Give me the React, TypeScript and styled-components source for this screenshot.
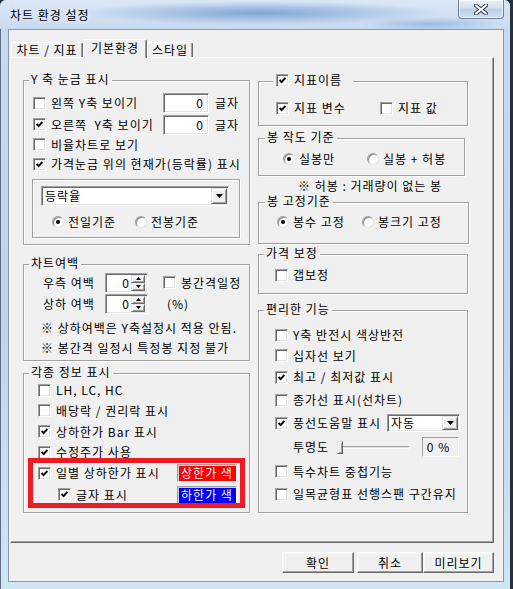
import React from "react"
import styled, { createGlobalStyle } from "styled-components"

/////////////////////////////////////////////////////////////////////////////

const FONT = `"Noto Sans CJK KR", "Noto Sans", "DejaVu Sans", sans-serif`
const FACE = "#f0f0f0"
const SUNKEN = `
  border: 1px solid;
  border-color: #a0a0a0 #ffffff #ffffff #a0a0a0;
  box-shadow: inset 1px 1px 0 #696969, inset -1px -1px 0 #e3e3e3;
`
const RAISED = `
  border: 1px solid;
  border-color: #e3e3e3 #696969 #696969 #e3e3e3;
  box-shadow: inset 1px 1px 0 #ffffff, inset -1px -1px 0 #a0a0a0;
`

const GlobalStyle = createGlobalStyle`
  html, body { margin: 0; padding: 0; }
  body {
    background: #27313c;
    font-family: ${FONT};
    font-size: 12px;
    line-height: 14px;
    letter-spacing: 1px;
    color: #000;
  }
`

/////////////////////////////////////////////////////////////////////////////
// small controls

const CheckMark = () => (
  <svg width="7" height="7" viewBox="0 0 7 7">
    <polyline points="0.6,3 2.6,5.2 6.4,1" fill="none" stroke="#000" strokeWidth="1.9" />
  </svg>
)

const Check = ({ on, label, w }: { on?: boolean; label?: string; w?: number }) => (
  <Item $w={w} $gap={5}>
    <CheckBox>{on && <CheckMark />}</CheckBox>
    {label && <Text>{label}</Text>}
  </Item>
)

const Radio = ({ on, label, w }: { on?: boolean; label: string; w?: number }) => (
  <Item $w={w} $gap={4}>
    <RadioRing>{on && <RadioDot />}</RadioRing>
    <Text>{label}</Text>
  </Item>
)

const Combo = ({ value, w, h }: { value: string; w: number; h: number }) => (
  <ComboBox $w={w} $h={h}>
    <ComboText>{value}</ComboText>
    <DropButton $s={h - 4}>
      <svg width="7" height="4" viewBox="0 0 7 4">
        <path d="M0 0H7L3.5 4Z" fill="#000" />
      </svg>
    </DropButton>
  </ComboBox>
)

const Spin = () => (
  <SpinBox>
    <SpinValue>0</SpinValue>
    <SpinButtons>
      <SpinButton>
        <svg width="5" height="3" viewBox="0 0 5 3">
          <path d="M0 3H5L2.5 0Z" fill="#000" />
        </svg>
      </SpinButton>
      <SpinButton>
        <svg width="5" height="3" viewBox="0 0 5 3">
          <path d="M0 0H5L2.5 3Z" fill="#000" />
        </svg>
      </SpinButton>
    </SpinButtons>
  </SpinBox>
)

const CloseGlyph = () => (
  <svg width="14" height="11" viewBox="0 0 14 11">
    <path d="M2 1.5L12 9.5M12 1.5L2 9.5" stroke="#2d3a4b" strokeWidth="4" strokeLinecap="square" />
    <path d="M2 1.5L12 9.5M12 1.5L2 9.5" stroke="#ffffff" strokeWidth="2" strokeLinecap="square" />
  </svg>
)

/////////////////////////////////////////////////////////////////////////////

const App = () => {
  return (
    <>
      <GlobalStyle />
      <Window>
        <TitleBar>
          <Caption>차트 환경 설정</Caption>
          <CloseButton>
            <CloseGlyph />
          </CloseButton>
        </TitleBar>

        <Client>
          <TabStrip>
            <Tab $w={72}>차트 / 지표</Tab>
            <Tab $w={64} $active>
              기본환경
            </Tab>
            <Tab $w={46}>스타일</Tab>
          </TabStrip>

          <Panel>
            <Column $w={227}>
              <Group $pt={11} $pb={6}>
                <Legend $left={5}>Y 축 눈금 표시</Legend>
                <Row $h={22} $pl={9}>
                  <Check w={130} label="왼쪽 Y축 보이기" />
                  <Edit>0</Edit>
                  <Unit>글자</Unit>
                </Row>
                <Row $h={21} $pl={9}>
                  <Check w={130} on label="오른쪽  Y축 보이기" />
                  <Edit>0</Edit>
                  <Unit>글자</Unit>
                </Row>
                <Row $h={19} $pl={9}>
                  <Check label="비율차트로 보기" />
                </Row>
                <Row $h={20} $pl={9}>
                  <Check on label="가격눈금 위의 현재가(등락률) 표시" />
                </Row>
                <InnerBox>
                  <Combo value="등락율" w={188} h={20} />
                  <Row $h={16} $pl={11} $mt={8}>
                    <Radio w={83} on label="전일기준" />
                    <Radio label="전봉기준" />
                  </Row>
                </InnerBox>
              </Group>

              <Group $pt={7} $pb={2} $mt={19}>
                <Legend $left={5}>차트여백</Legend>
                <Row $h={21} $pl={19}>
                  <FieldLabel>우측 여백</FieldLabel>
                  <Spin />
                  <Spacer $w={15} />
                  <Check label="봉간격일정" />
                </Row>
                <Row $h={21} $pl={19}>
                  <FieldLabel>상하 여백</FieldLabel>
                  <Spin />
                  <Spacer $w={19} />
                  <Text>(%)</Text>
                </Row>
                <Row $h={20} $pl={17} $mt={4}>
                  <Text>※ 상하여백은 Y축설정시 적용 안됨.</Text>
                </Row>
                <Row $h={20} $pl={17}>
                  <Text>※ 봉간격 일정시 특정봉 지정 불가</Text>
                </Row>
              </Group>

              <Group $pt={6} $pb={7} $mt={12}>
                <Legend $left={5}>각종 정보 표시</Legend>
                <Row $h={20} $pl={14}>
                  <Check label="LH, LC, HC" />
                </Row>
                <Row $h={21} $pl={14}>
                  <Check label="배당락 / 권리락 표시" />
                </Row>
                <Row $h={21} $pl={14}>
                  <Check on label="상하한가 Bar 표시" />
                </Row>
                <Row $h={20} $pl={14}>
                  <Check on label="수정주가 사용" />
                </Row>
                <Row $h={22} $pl={14} $pr={12}>
                  <Check on label="일별 상하한가 표시" />
                  <ColorButton $bg="#ff0000">상한가 색</ColorButton>
                </Row>
                <Row $h={21} $pl={34} $pr={12}>
                  <Check on label="글자 표시" />
                  <ColorButton $bg="#0000ff">하한가 색</ColorButton>
                </Row>
                <Highlight />
              </Group>
            </Column>

            <Column $w={211} $pt={1}>
              <Group $w={210} $pt={16} $pb={7}>
                <Legend $left={14} $pr={11} $pl={3}>
                  <Check on label="지표이름" />
                </Legend>
                <Row $h={20} $pl={17}>
                  <Check w={104} on label="지표 변수" />
                  <Check label="지표 값" />
                </Row>
              </Group>

              <Group $w={207} $pt={12} $pb={8} $mt={12}>
                <Legend $left={6}>봉 작도 기준</Legend>
                <Row $h={16} $pl={24}>
                  <Radio w={84} on label="실봉만" />
                  <Radio label="실봉 + 허봉" />
                </Row>
              </Group>

              <Row $h={20} $pl={40}>
                <Text>※ 허봉 : 거래량이 없는 봉</Text>
              </Row>

              <Group $w={211} $pt={11} $pb={13} $mt={6}>
                <Legend $left={6}>봉 고정기준</Legend>
                <Row $h={16} $pl={18}>
                  <Radio w={85} on label="봉수 고정" />
                  <Radio label="봉크기 고정" />
                </Row>
              </Group>

              <Group $w={210} $pt={10} $pb={8} $mt={10}>
                <Legend $left={5}>가격 보정</Legend>
                <Row $h={20} $pl={16}>
                  <Check label="갭보정" />
                </Row>
              </Group>

              <Group $w={210} $pt={14} $pb={7} $mt={16}>
                <Legend $left={5}>편리한 기능</Legend>
                <Row $h={20} $pl={16}>
                  <Check label="Y축 반전시 색상반전" />
                </Row>
                <Row $h={21} $pl={16}>
                  <Check label="십자선 보기" />
                </Row>
                <Row $h={22} $pl={16}>
                  <Check on label="최고 / 최저값 표시" />
                </Row>
                <Row $h={24} $pl={16}>
                  <Check label="종가선 표시(선차트)" />
                </Row>
                <Row $h={22} $pl={16}>
                  <Check w={112} on label="풍선도움말 표시" />
                  <Combo value="자동" w={73} h={18} />
                </Row>
                <Row $h={26} $pl={34}>
                  <FieldLabel $w={44}>투명도</FieldLabel>
                  <Slider>
                    <Track />
                    <Thumb />
                  </Slider>
                  <ValueBox>0 %</ValueBox>
                </Row>
                <Row $h={23} $pl={16}>
                  <Check label="특수차트 중첩기능" />
                </Row>
                <Row $h={22} $pl={16}>
                  <Check label="일목균형표 선행스팬 구간유지" />
                </Row>
              </Group>
            </Column>
          </Panel>

          <ButtonRow>
            <PushButton $w={72} $mr={3}>
              확인
            </PushButton>
            <PushButton $w={66}>취소</PushButton>
            <PushButton $w={71}>미리보기</PushButton>
          </ButtonRow>
        </Client>
      </Window>
    </>
  )
}

/////////////////////////////////////////////////////////////////////////////
// window frame

const Window = styled.div`
  width: 510px;
  height: 589px;
  box-sizing: border-box;
  overflow: hidden;
  border-radius: 6px 6px 0 0;
  background: linear-gradient(180deg, #c8daef 0%, #c0d4eb 55%, #cfe6f4 100%);
  box-shadow: inset 1px 0 0 #5d6e84;
`

const TitleBar = styled.div`
  height: 29px;
  display: flex;
  align-items: flex-start;
  padding-left: 10px;
  background:
    radial-gradient(ellipse 180px 12px at 260px 13px, rgba(74, 124, 196, 0.6), rgba(74, 124, 196, 0)),
    radial-gradient(ellipse 70px 7px at 430px 24px, rgba(110, 155, 215, 0.5), rgba(110, 155, 215, 0)),
    linear-gradient(180deg, #dae7f6 0%, #c9dbf0 100%);
`

const Caption = styled.span`
  margin-top: 8px;
  color: #000;
  text-shadow: 0 0 6px rgba(255, 255, 255, 0.9);
`

const CloseButton = styled.div`
  margin-left: auto;
  margin-right: 6px;
  width: 46px;
  height: 19px;
  box-sizing: border-box;
  display: flex;
  align-items: center;
  justify-content: center;
  border: 1px solid #6f8199;
  border-top: none;
  border-radius: 0 0 4px 4px;
  background: linear-gradient(180deg, #e9f0f9 0%, #d3e0f0 45%, #bccde4 50%, #d2e1f2 100%);
  box-shadow: inset 0 0 0 1px rgba(255, 255, 255, 0.55);
`

const Client = styled.div`
  margin: 0 6px 0 8px;
  height: 553px;
  box-sizing: border-box;
  border: 1px solid #8898ad;
  background: ${FACE};
  padding: 9px 0 0 1px;
`

/////////////////////////////////////////////////////////////////////////////
// tabs

const TabStrip = styled.div`
  height: 18px;
  display: flex;
  align-items: flex-end;
  padding-left: 1px;
`

const Tab = styled.div<{ $w: number; $active?: boolean }>`
  width: ${({ $w }) => $w}px;
  height: ${({ $active }) => ($active ? 19 : 15)}px;
  margin-bottom: ${({ $active }) => ($active ? -1 : 0)}px;
  box-sizing: border-box;
  position: relative;
  z-index: ${({ $active }) => ($active ? 1 : 0)};
  display: flex;
  align-items: ${({ $active }) => ($active ? "flex-start" : "center")};
  padding-top: ${({ $active }) => ($active ? 1 : 0)}px;
  justify-content: center;
  background: ${FACE};
  border: 1px solid;
  border-bottom: none;
  border-color: #ffffff #696969 transparent #ffffff;
  border-radius: 2px 2px 0 0;
  box-shadow: inset -1px 0 0 #a0a0a0;
`

const Panel = styled.div`
  width: 484px;
  height: 486px;
  box-sizing: border-box;
  display: flex;
  gap: 8px;
  padding: 22px 0 0 12px;
  border: 1px solid;
  border-color: #ffffff #696969 #696969 #ffffff;
  box-shadow: inset -1px -1px 0 #a0a0a0;
`

const Column = styled.div<{ $w: number; $pt?: number }>`
  width: ${({ $w }) => $w}px;
  padding-top: ${({ $pt = 0 }) => $pt}px;
  display: flex;
  flex-direction: column;
`

/////////////////////////////////////////////////////////////////////////////
// group boxes

const Group = styled.div<{ $w?: number; $pt: number; $pb: number; $mt?: number }>`
  position: relative;
  width: ${({ $w }) => ($w ? `${$w}px` : "auto")};
  box-sizing: border-box;
  margin-top: ${({ $mt = 0 }) => $mt}px;
  padding: ${({ $pt }) => $pt}px 0 ${({ $pb }) => $pb}px 0;
  border: 1px solid #a0a0a0;
  box-shadow: 1px 1px 0 #ffffff, inset 1px 1px 0 #ffffff;
  display: flex;
  flex-direction: column;
`

const Legend = styled.div<{ $left: number; $pl?: number; $pr?: number }>`
  position: absolute;
  top: -9px;
  left: ${({ $left }) => $left}px;
  height: 14px;
  display: flex;
  align-items: center;
  padding: 0 ${({ $pr = 2 }) => $pr}px 0 ${({ $pl = 2 }) => $pl}px;
  background: ${FACE};
  white-space: pre;
`

const InnerBox = styled.div`
  margin: 5px 9px 0 8px;
  padding: 6px 0 7px 8px;
  border: 1px solid #a0a0a0;
  box-shadow: 1px 1px 0 #ffffff, inset 1px 1px 0 #ffffff;
  display: flex;
  flex-direction: column;
`

const Highlight = styled.div`
  position: absolute;
  left: 4px;
  top: 84px;
  width: 217px;
  height: 50px;
  box-sizing: border-box;
  border: 5px solid #ed1c24;
  pointer-events: none;
`

/////////////////////////////////////////////////////////////////////////////
// rows and labels

const Row = styled.div<{ $h: number; $pl?: number; $pr?: number; $mt?: number }>`
  height: ${({ $h }) => $h}px;
  margin-top: ${({ $mt = 0 }) => $mt}px;
  padding: 0 ${({ $pr = 0 }) => $pr}px 0 ${({ $pl = 0 }) => $pl}px;
  display: flex;
  align-items: center;
  flex: none;
`

const Item = styled.div<{ $w?: number; $gap: number }>`
  display: flex;
  align-items: center;
  gap: ${({ $gap }) => $gap}px;
  width: ${({ $w }) => ($w ? `${$w}px` : "auto")};
  flex: none;
`

const Text = styled.span`
  white-space: pre;
`

const FieldLabel = styled.span<{ $w?: number }>`
  width: ${({ $w = 62 }) => $w}px;
  flex: none;
  white-space: pre;
`

const Unit = styled.span`
  margin-left: 6px;
`

const Spacer = styled.span<{ $w: number }>`
  width: ${({ $w }) => $w}px;
  flex: none;
`

/////////////////////////////////////////////////////////////////////////////
// inputs

const CheckBox = styled.span`
  width: 13px;
  height: 13px;
  box-sizing: border-box;
  flex: none;
  display: inline-flex;
  align-items: center;
  justify-content: center;
  background: #ffffff;
  ${SUNKEN}
`

const RadioRing = styled.span`
  width: 12px;
  height: 12px;
  box-sizing: border-box;
  flex: none;
  border-radius: 50%;
  display: inline-flex;
  align-items: center;
  justify-content: center;
  background: #ffffff;
  border: 1px solid;
  border-color: #a0a0a0 #e3e3e3 #e3e3e3 #a0a0a0;
  box-shadow: inset 1px 1px 0 #8a8a8a;
`

const RadioDot = styled.span`
  width: 4px;
  height: 4px;
  border-radius: 50%;
  background: #000;
`

const Edit = styled.div`
  width: 46px;
  height: 20px;
  box-sizing: border-box;
  display: flex;
  align-items: center;
  justify-content: flex-end;
  padding-right: 4px;
  background: #ffffff;
  ${SUNKEN}
`

const ComboBox = styled.div<{ $w: number; $h: number }>`
  width: ${({ $w }) => $w}px;
  height: ${({ $h }) => $h}px;
  box-sizing: border-box;
  display: flex;
  align-items: center;
  padding: 0 1px 0 3px;
  background: #ffffff;
  ${SUNKEN}
`

const ComboText = styled.span`
  flex: 1;
`

const DropButton = styled.span<{ $s: number }>`
  width: 16px;
  height: ${({ $s }) => $s}px;
  box-sizing: border-box;
  display: flex;
  align-items: center;
  justify-content: center;
  background: ${FACE};
  ${RAISED}
`

const SpinBox = styled.div`
  width: 43px;
  height: 20px;
  box-sizing: border-box;
  display: flex;
  align-items: center;
  padding: 0 2px 0 0;
  background: #ffffff;
  ${SUNKEN}
`

const SpinValue = styled.span`
  flex: 1;
  text-align: right;
  padding-right: 1px;
`

const SpinButtons = styled.div`
  width: 14px;
  display: flex;
  flex-direction: column;
`

const SpinButton = styled.span`
  height: 8px;
  box-sizing: border-box;
  display: flex;
  align-items: center;
  justify-content: center;
  background: ${FACE};
  ${RAISED}
`

const Slider = styled.div`
  position: relative;
  width: 72px;
  height: 13px;
  flex: none;
`

const Track = styled.div`
  position: absolute;
  left: 2px;
  right: 0;
  top: 5px;
  height: 3px;
  box-sizing: border-box;
  border-top: 1px solid #a0a0a0;
  border-bottom: 1px solid #ffffff;
  background: #e3e3e3;
`

const Thumb = styled.div`
  position: absolute;
  left: 0;
  top: 0;
  width: 6px;
  height: 13px;
  box-sizing: border-box;
  background: ${FACE};
  ${RAISED}
`

const ValueBox = styled.div`
  margin-left: 13px;
  width: 37px;
  height: 20px;
  box-sizing: border-box;
  display: flex;
  align-items: center;
  justify-content: center;
  padding-right: 4px;
  border: 1px solid;
  border-color: #a0a0a0 #ffffff #ffffff #a0a0a0;
`

const ColorButton = styled.div<{ $bg: string }>`
  margin-left: auto;
  width: 60px;
  height: 18px;
  box-sizing: border-box;
  display: flex;
  align-items: center;
  justify-content: center;
  background: ${({ $bg }) => $bg};
  color: #ffffff;
  border: 1px solid;
  border-color: #a0a0a0 #ffffff #ffffff #a0a0a0;
  box-shadow: inset 1px 1px 0 #d0d0d0;
`

/////////////////////////////////////////////////////////////////////////////
// dialog buttons

const ButtonRow = styled.div`
  width: 484px;
  margin-top: 9px;
  display: flex;
  justify-content: flex-end;
`

const PushButton = styled.div<{ $w: number; $mr?: number }>`
  width: ${({ $w }) => $w}px;
  height: 21px;
  margin-right: ${({ $mr = 0 }) => $mr}px;
  box-sizing: border-box;
  display: flex;
  align-items: center;
  justify-content: center;
  background: ${FACE};
  border: 1px solid;
  border-color: #ffffff #696969 #696969 #ffffff;
  box-shadow: inset -1px -1px 0 #a0a0a0, inset 1px 1px 0 #f8f8f8;
`

export default App
